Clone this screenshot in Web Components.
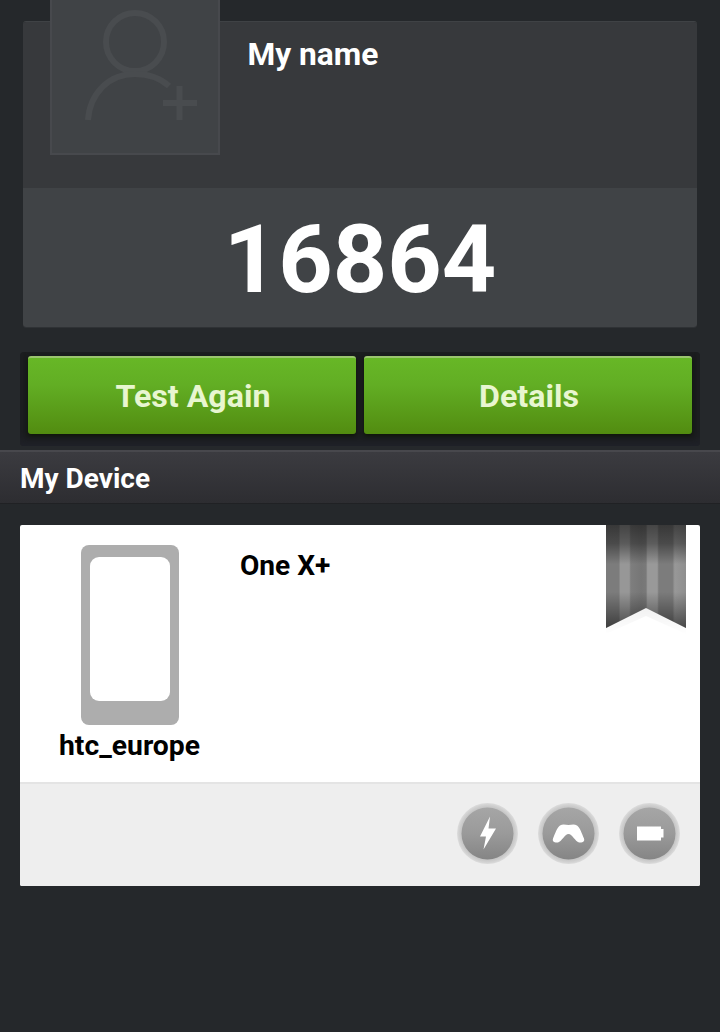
<!DOCTYPE html>
<html><head><meta charset="utf-8">
<style>
html,body{margin:0;padding:0;height:1032px;overflow:hidden;background:#25282b;font-family:Roboto,"Liberation Sans",sans-serif;}
body{display:flex;flex-direction:column;}
</style></head><body>
<score-card name="My name" score="16864"></score-card>
<action-tray><green-button>Test Again</green-button><green-button>Details</green-button></action-tray>
<section-header>My Device</section-header>
<device-card brand="htc_europe" model="One X+"></device-card>
<script>
function def(name,html,init){
  customElements.define(name,class extends HTMLElement{
    connectedCallback(){
      if(this.shadowRoot)return;
      const s=this.attachShadow({mode:'open'});
      s.innerHTML=html;
      if(init)init(this,s);
    }
  });
}
def('score-card',`<style>
:host{display:block;position:relative;margin:21px 23px 0;height:306px;border-radius:3px;overflow:visible;box-shadow:0 1px 0 #2f3235;}
.wrap{display:flex;flex-direction:column;height:100%;border-radius:3px;overflow:hidden;border-top:1px solid #3f4245;box-sizing:border-box;}
.top{flex:none;height:166px;background:#37393c;box-sizing:border-box;padding:14px 0 0 224.5px;color:#fff;font-weight:700;font-size:31.7px;line-height:37px;}
.bottom{flex:1;min-height:0;background:#404346;color:#fff;font-weight:700;font-size:95px;line-height:143px;text-align:center;}
.avatar{position:absolute;left:27px;top:-21px;width:170px;height:155px;box-sizing:border-box;background:#404346;border:solid #47494d;border-width:0 2px 2px 2px;}
svg{display:block;position:absolute;left:0;top:0}
</style>
<div class="wrap"><div class="top" id="n"></div><div class="bottom" id="s"></div></div>
<div class="avatar"><svg width="166" height="153" viewBox="0 0 166 153" fill="none" stroke="#494c4f" stroke-width="6">
<circle cx="83" cy="42" r="29"/>
<path d="M36 120C38 93 57 74 83 74C97 74 108 78 117 86"/>
<path d="M111 103H145M127.500 86V120"/>
</svg></div>`,(h,s)=>{s.getElementById('n').textContent=h.getAttribute('name');s.getElementById('s').textContent=h.getAttribute('score');});
def('action-tray',`<style>
:host{display:flex;gap:8px;margin:25px 20px 0;padding:4px 8px 12px;height:78px;background:#1b1d1f;border-radius:4px;box-shadow:inset 0 -8px 8px -4px #20222a;}
::slotted(*){flex:1 1 0}
</style><slot></slot>`);
def('green-button',`<style>
:host{display:flex;align-items:center;justify-content:center;padding:0 0 1px 2px;border-radius:3px;background:linear-gradient(#67b726 0%,#62ae24 35%,#528c10 100%);border-top:2px solid #9bc56f;box-sizing:border-box;color:#e8f6d0;font-weight:700;font-size:32.2px;box-shadow:0 2px 4px #0e1408;}
</style><slot></slot>`);
def('section-header',`<style>
:host{display:flex;align-items:center;margin-top:4px;height:54px;box-sizing:border-box;padding:1px 0 0 20px;background:linear-gradient(#3b3b40,#2d2d31);border-top:2px solid #48484d;border-bottom:1px solid #202124;color:#fff;font-weight:700;font-size:28px;}
</style><slot></slot>`);
def('device-card',`<style>
:host{display:block;position:relative;margin:21px 20px 0;height:361px;background:#fff;border-radius:2px;overflow:hidden;color:#000;font-weight:700;}
.main{height:259px;display:flex;box-sizing:border-box;border-bottom:2px solid #e4e4e4;}
.dev{width:220px;display:flex;flex-direction:column;align-items:center;padding-top:20px;box-sizing:border-box;}
.phone{width:98px;height:180px;background:#adadad;border-radius:8px;box-sizing:border-box;padding:12px 9px 24px;}
.screen{width:80px;height:144px;background:#fff;border-radius:9px;}
.brand{font-size:28.3px;line-height:32px;margin-top:5px;margin-right:1px;white-space:nowrap;}
.model{font-size:28.1px;line-height:32px;margin-top:25px;}
.foot{height:102px;background:#eee;display:flex;justify-content:flex-end;align-items:flex-start;gap:20px;padding:19px 20px 0;box-sizing:border-box;}
.rib{position:absolute;right:14px;top:0;}
</style>
<div class="main"><div class="dev"><div class="phone"><div class="screen"></div></div><div class="brand" id="b"></div></div><div class="model" id="m"></div></div>
<div class="foot">
<stat-badge kind="bolt"></stat-badge><stat-badge kind="pad"></stat-badge><stat-badge kind="bat"></stat-badge>
</div>
<svg class="rib" width="80" height="112" viewBox="0 0 80 112">
<defs>
<linearGradient id="st" x1="0" x2="1" y1="0" y2="0">
<stop offset="0" stop-color="#7c7c7c"/><stop offset=".16" stop-color="#7c7c7c"/><stop offset=".18" stop-color="#979797"/><stop offset=".29" stop-color="#979797"/><stop offset=".31" stop-color="#7e7e7e"/><stop offset=".44" stop-color="#767676"/><stop offset=".5" stop-color="#797979"/><stop offset=".52" stop-color="#999"/><stop offset=".64" stop-color="#999"/><stop offset=".66" stop-color="#7c7c7c"/><stop offset=".83" stop-color="#7c7c7c"/><stop offset=".86" stop-color="#989898"/><stop offset="1" stop-color="#8e8e8e"/>
</linearGradient>
<linearGradient id="ov" gradientUnits="userSpaceOnUse" x1="0" x2="0" y1="0" y2="103">
<stop offset="0" stop-color="#000" stop-opacity=".55"/><stop offset=".18" stop-color="#000" stop-opacity=".4"/><stop offset=".38" stop-color="#000" stop-opacity="0"/><stop offset=".65" stop-color="#000" stop-opacity="0"/><stop offset="1" stop-color="#000" stop-opacity=".5"/>
</linearGradient>
<linearGradient id="gl" gradientUnits="userSpaceOnUse" x1="0" x2="0" y1="85" y2="110"><stop offset="0" stop-color="#000" stop-opacity=".05"/><stop offset="1" stop-color="#000" stop-opacity="0"/></linearGradient>
</defs>
<path d="M0 103L40 83L80 103V109L40 91L0 109Z" fill="url(#gl)"/>
<path d="M0 0H80V103L40 83L0 103Z" fill="url(#st)"/>
<path d="M0 0H80V103L40 83L0 103Z" fill="url(#ov)"/>
</svg>`,(h,s)=>{s.getElementById('b').textContent=h.getAttribute('brand');s.getElementById('m').textContent=h.getAttribute('model');});
const glyph={
 bolt:'<path d="M33 13.500L23 33.500H29L26.500 46.500L39 25.500H31.500Z" fill="#fff"/>',
 pad:'<path d="M22 22.500C25 20.500 28 22 30.500 22C33 22 36 20.500 39 22.500C42 24.500 44 31 46 35.500C47 38.500 44.500 40 41 39.500C37 38.500 34.500 31 30.500 31C26.500 31 24 38.500 20 39.500C16.500 40 14 38.500 15 35.500C17 31 19 24.500 22 22.500Z" fill="#fff"/>',
 bat:'<path d="M18 23.500H42V26H44.500V34.500H42V37.500H18Z" fill="#fff"/>'
};
def('stat-badge',`<style>:host{display:block;width:61px;height:61px;}svg{display:block}</style>
<svg width="61" height="61" viewBox="0 0 61 61"><defs><linearGradient id="g" x1="0" x2="0" y1="0" y2="1"><stop offset="0" stop-color="#a6a6a6"/><stop offset=".5" stop-color="#9a9a9a"/><stop offset="1" stop-color="#858585"/></linearGradient>
<radialGradient id="r"><stop offset=".8" stop-color="#bdbdbd"/><stop offset=".93" stop-color="#d0d0d0"/><stop offset="1" stop-color="#dcdcdc"/></radialGradient></defs>
<circle cx="30.5" cy="30.500" r="30.500" fill="url(#r)"/><circle cx="30.5" cy="30.500" r="26" fill="url(#g)"/><g id="i"></g></svg>`,(h,s)=>{s.getElementById('i').innerHTML=glyph[h.getAttribute('kind')];});
</script>
</body></html>
